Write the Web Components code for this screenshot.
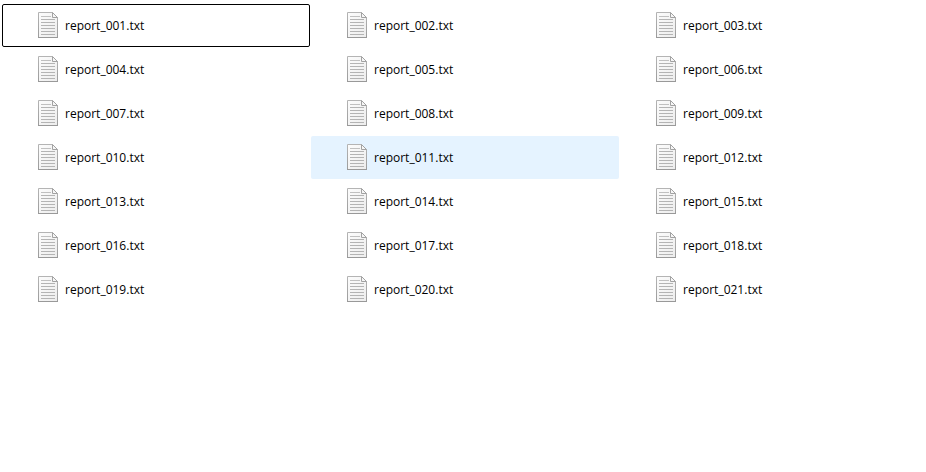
<!DOCTYPE html>
<html lang="en">
<head>
<meta charset="utf-8">
<meta name="viewport" content="width=device-width, initial-scale=1">
<title>Reports</title>
<style>
  body {
    background: #fff;
    color: #000;
    font-family: "Open Sans", "Noto Sans", sans-serif;
    font-size: 12px;
    margin: 0;
    overflow-x: hidden;
  }
</style>
</head>
<body>
<file-list count="21" focused="1" hovered="11"></file-list>

<script>
const iconTemplate = document.createElement('template');
iconTemplate.innerHTML = `
  <style>
  :host {
    display: block;
    flex: none;
    height: 27px;
    width: 20px;
  }

  svg {
    display: block;
  }
  </style>
  <svg width="20" height="27" viewBox="0 0 20 27" fill="none" aria-hidden="true">
    <defs>
      <linearGradient id="paper" x1="0" y1="0" x2="1" y2="1">
        <stop offset="0" stop-color="#fcfcfc"/>
        <stop offset="1" stop-color="#ededed"/>
      </linearGradient>
      <linearGradient id="edge" x1="0" y1="0" x2="0" y2="1">
        <stop offset="0" stop-color="#b4b4b4"/>
        <stop offset="1" stop-color="#9c9c9c"/>
      </linearGradient>
    </defs>
    <path d="M.5 .5H14.5L19.5 5.5V25.5H.5Z" fill="url(#paper)" stroke="url(#edge)"/>
    <path d="M0 25.5H20" stroke="#999"/>
    <path d="M14.5 .5V5.5H19.5Z" fill="#f6f6f6" stroke="#a2a2a2"/>
    <path d="M3 4.5H13" stroke="#c0c0c0"/>
    <path d="M3 7.5H17M3 10.5H17M3 13.5H17M3 16.5H17M3 19.5H17M3 22.5H17" stroke="#b4b4b4"/>
  </svg>
  `;

class FileIcon extends HTMLElement {
  constructor() {
    super();
    this.attachShadow({ mode: 'open' });
    this.shadowRoot.appendChild(iconTemplate.content.cloneNode(true));
  }
}

const itemTemplate = document.createElement('template');
itemTemplate.innerHTML = `
  <style>
  :host {
    display: block;
  }

  button {
    align-items: center;
    background: transparent;
    border: 1px solid transparent;
    border-radius: 2px;
    box-sizing: border-box;
    color: inherit;
    display: flex;
    font: inherit;
    gap: 7px;
    min-height: 43px;
    outline: none;
    padding: 0 35px;
    text-align: left;
    width: 100%;
  }

  button:hover,
  :host([hovered]) button {
    background: #e5f3ff;
  }

  button:focus-visible,
  :host([focused]) button {
    border-color: #000;
  }
  </style>
  <button type="button">
    <file-icon></file-icon>
    <span><slot></slot></span>
  </button>
  `;

class FileItem extends HTMLElement {
  constructor() {
    super();
    this.attachShadow({ mode: 'open' });
    this.shadowRoot.appendChild(itemTemplate.content.cloneNode(true));
  }
}

class FileList extends HTMLElement {
  constructor() {
    super();
    this.attachShadow({ mode: 'open' });
  }

  connectedCallback() {
    const focused = Number(this.getAttribute('focused'));
    const hovered = Number(this.getAttribute('hovered'));
    const numbers = Array.from({ length: Number(this.getAttribute('count')) }, (_, i) => i + 1);

    this.shadowRoot.innerHTML = `
      <style>
      :host {
        display: block;
      }

      /* the last column runs just past the right edge */
      .grid {
        display: grid;
        gap: 1px;
        grid-template-columns: repeat(3, 1fr);
        margin-right: -2px;
        padding: 4px 0 0 2px;
      }
      </style>
      <div class="grid">
        ${numbers.map(n => `<file-item${n === focused ? ' focused' : ''}${n === hovered ? ' hovered' : ''}>report_${String(n).padStart(3, '0')}.txt</file-item>`).join('')}
      </div>
      `;
  }
}

customElements.define('file-icon', FileIcon);
customElements.define('file-item', FileItem);
customElements.define('file-list', FileList);
</script>
</body>
</html>
